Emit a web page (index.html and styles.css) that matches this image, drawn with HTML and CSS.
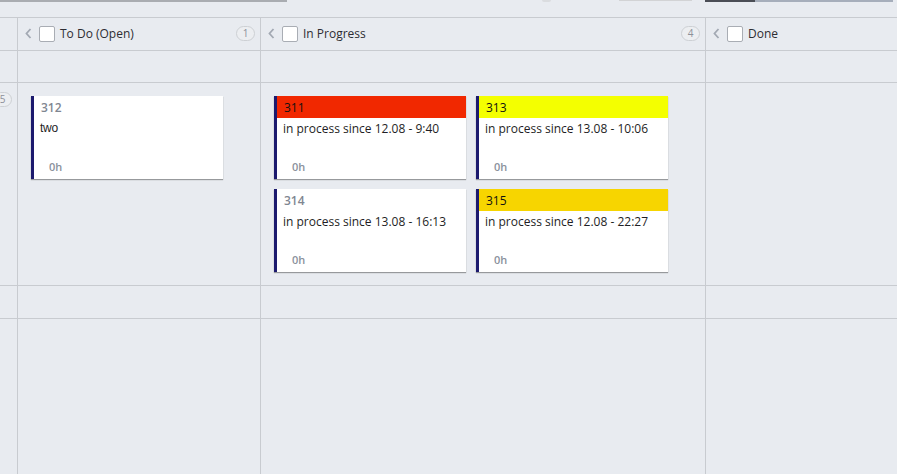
FILE: index.html
```html
<!DOCTYPE html>
<html>
<head>
<meta charset="utf-8">
<link rel="stylesheet" href="styles.css">
</head>
<body>
<div class="board">
  <div class="topbar">
    <span class="seg seg-gray1"></span>
    <span class="seg seg-gap1"></span>
    <span class="seg seg-arc"></span>
    <span class="seg seg-gap2"></span>
    <span class="seg seg-light"></span>
    <span class="seg seg-gap3"></span>
    <span class="seg seg-dark"></span>
    <span class="seg seg-gray2"></span>
  </div>

  <div class="row row-head">
    <div class="cell c0"></div>
    <div class="cell c1 head">
      <svg class="chev" width="7" height="11" viewBox="0 0 7 11"><polyline points="5.5,1 1.5,5.5 5.5,10" fill="none" stroke="#a3a9b3" stroke-width="1.8"/></svg>
      <span class="check"></span>
      <span class="title">To Do (Open)</span>
      <span class="badge">1</span>
    </div>
    <div class="cell c2 head">
      <svg class="chev" width="7" height="11" viewBox="0 0 7 11"><polyline points="5.5,1 1.5,5.5 5.5,10" fill="none" stroke="#a3a9b3" stroke-width="1.8"/></svg>
      <span class="check"></span>
      <span class="title">In Progress</span>
      <span class="badge">4</span>
    </div>
    <div class="cell c3 head">
      <svg class="chev" width="7" height="11" viewBox="0 0 7 11"><polyline points="5.5,1 1.5,5.5 5.5,10" fill="none" stroke="#a3a9b3" stroke-width="1.8"/></svg>
      <span class="check"></span>
      <span class="title">Done</span>
    </div>
  </div>

  <div class="row row-sub">
    <div class="cell c0"></div>
    <div class="cell c1"></div>
    <div class="cell c2"></div>
    <div class="cell c3"></div>
  </div>

  <div class="row row-lane">
    <div class="cell c0 lane-label"><span class="badge">5</span></div>
    <div class="cell c1 lane">
      <div class="card">
        <div class="card-num plain">312</div>
        <div class="card-body two">two</div>
        <div class="card-foot">0h</div>
      </div>
    </div>
    <div class="cell c2 lane">
      <div class="card">
        <div class="card-num red">311</div>
        <div class="card-body">in process since 12.08 - 9:40</div>
        <div class="card-foot">0h</div>
      </div>
      <div class="card">
        <div class="card-num yellow">313</div>
        <div class="card-body">in process since 13.08 - 10:06</div>
        <div class="card-foot">0h</div>
      </div>
      <div class="card">
        <div class="card-num plain">314</div>
        <div class="card-body">in process since 13.08 - 16:13</div>
        <div class="card-foot">0h</div>
      </div>
      <div class="card">
        <div class="card-num gold">315</div>
        <div class="card-body">in process since 12.08 - 22:27</div>
        <div class="card-foot">0h</div>
      </div>
    </div>
    <div class="cell c3"></div>
  </div>

  <div class="row row-sub2">
    <div class="cell c0"></div>
    <div class="cell c1"></div>
    <div class="cell c2"></div>
    <div class="cell c3"></div>
  </div>

  <div class="row row-rest">
    <div class="cell c0"></div>
    <div class="cell c1"></div>
    <div class="cell c2"></div>
    <div class="cell c3"></div>
  </div>
</div>
</body>
</html>
```

FILE: styles.css
```css
* { box-sizing: border-box; }
html, body {
  margin: 0;
  padding: 0;
  height: 100%;
}
body {
  background: #e8ebf0;
  font-family: "Open Sans", "DejaVu Sans", sans-serif;
  color: #2b2b2b;
  overflow: hidden;
}
.board {
  display: flex;
  flex-direction: column;
  height: 474px;
}
.topbar {
  height: 18px;
  flex: none;
  display: flex;
  align-items: flex-start;
  border-bottom: 1px solid #c8cbd0;
}
.seg { display: block; height: 2px; flex: none; }
.seg-gray1 { width: 287px; background: #a9acb1; }
.seg-gap1 { width: 255px; }
.seg-arc { width: 9px; height: 2px; background: #dadcdf; border-radius: 0 0 5px 5px; }
.seg-gap2 { width: 68px; }
.seg-light { width: 73px; background: #d2d3d5; height: 1px; }
.seg-gap3 { width: 13px; }
.seg-dark { width: 50px; background: #4a4d55; }
.seg-gray2 { width: 138px; background: #a6aebb; }

.row {
  display: grid;
  grid-template-columns: 17px 243px 445px 1fr;
  border-bottom: 1px solid #c8cbd0;
  flex: none;
}
.row-head { height: 33px; }
.row-sub { height: 32px; }
.row-lane { height: 203px; }
.row-sub2 { height: 33px; }
.row-rest { flex: 1; border-bottom: none; }

.cell { min-width: 0; }
.c1, .c2, .c3 { border-left: 1px solid #c8cbd0; }

.head {
  display: flex;
  align-items: center;
  padding-left: 7px;
  padding-right: 5px;
  padding-bottom: 1px;
}
.chev { flex: none; margin-right: 7px; }
.check {
  width: 16px;
  height: 16px;
  background: #fff;
  border: 1px solid #a9adb4;
  border-radius: 2px;
  flex: none;
  margin-right: 5px;
}
.title {
  font-size: 12px;
  color: #2d2d33;
  flex: 1;
}
.badge {
  flex: none;
  width: 19px;
  height: 15px;
  border: 1px solid #cdd0d4;
  border-radius: 8px;
  font-size: 10px;
  line-height: 13px;
  color: #8c9099;
  text-align: center;
  background: #eceef1;
}

.lane-label {
  overflow: hidden;
  display: flex;
  justify-content: flex-end;
  align-items: flex-start;
  padding-top: 9px;
  padding-right: 5px;
}

.lane {
  padding: 13px;
  display: grid;
  grid-template-columns: repeat(2, 192px);
  grid-auto-rows: 83px;
  column-gap: 10px;
  row-gap: 10px;
  align-content: start;
}
.c1.lane { grid-template-columns: 192px; }

.card {
  background: #fff;
  border-left: 3px solid #1c1a6e;
  box-shadow: 0 1px 1px rgba(0,0,0,0.35);
  display: flex;
  flex-direction: column;
}
.card-num {
  height: 22px;
  line-height: 24px;
  padding-left: 7px;
  font-size: 12px;
  font-weight: 400;
  color: #111;
}
.card-num.plain { color: #7f8691; font-weight: 600; }
.card-num.red { background: #f12800; }
.card-num.yellow { background: #f4ff00; }
.card-num.gold { background: #f7d500; }
.card-body {
  flex: 1;
  padding-left: 6px;
  padding-top: 1px;
  font-size: 12px;
  line-height: 19px;
  color: #1e1e24;
}
.card-body.two {
  font-family: "Liberation Sans", Arial, sans-serif;
  letter-spacing: -0.3px;
}
.card-foot {
  height: 25px;
  line-height: 26px;
  padding-left: 15px;
  font-size: 11px;
  font-weight: 600;
  color: #8a919c;
}
```
